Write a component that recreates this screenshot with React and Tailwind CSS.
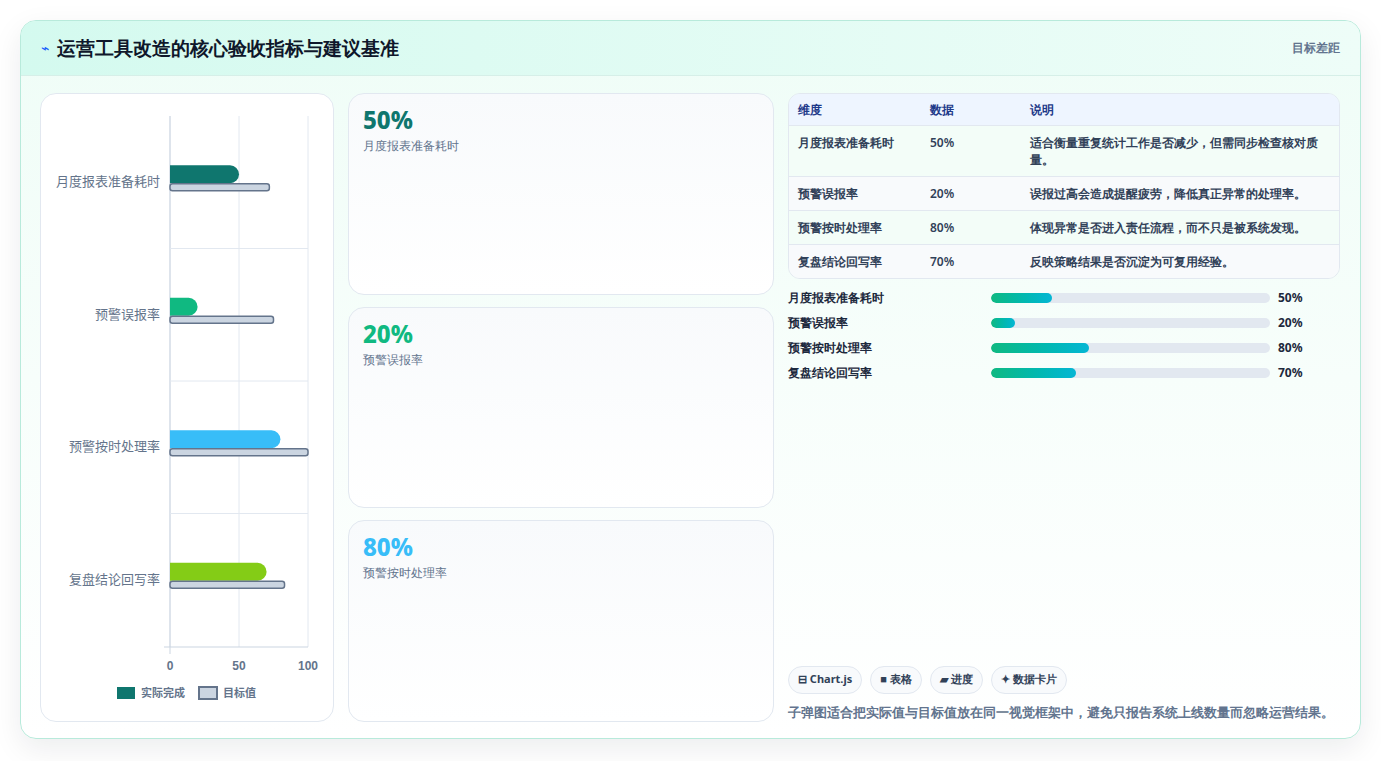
const rows = [
  { name: "月度报表准备耗时", v: 50, t: 72, c: "#0f766e", vc: "text-[#0f766e]", note: "适合衡量重复统计工作是否减少，但需同步检查核对质量。" },
  { name: "预警误报率", v: 20, t: 75, c: "#10b981", vc: "text-[#10b981]", note: "误报过高会造成提醒疲劳，降低真正异常的处理率。" },
  { name: "预警按时处理率", v: 80, t: 100, c: "#38bdf8", vc: "text-[#38bdf8]", note: "体现异常是否进入责任流程，而不只是被系统发现。" },
  { name: "复盘结论回写率", v: 70, t: 83, c: "#84cc16", vc: "", note: "反映策略结果是否沉淀为可复用经验。" },
];

function Chart() {
  const x0 = 129, w = 138, top = 22, band = 132.5;
  return (
    <svg width="294" height="627" className="block">
      {[0, 50, 100].map((g) => (
        <line key={g} x1={x0 + (g / 100) * w} x2={x0 + (g / 100) * w} y1={top} y2={553} stroke="#e2e8f0" />
      ))}
      <line x1={x0} x2={x0} y1={top} y2={560} stroke="#cbd5e1" />
      <line x1={x0 - 6} x2={x0 + w} y1={553} y2={553} stroke="#cbd5e1" />
      {[1, 2, 3].map((i) => (
        <line key={i} x1={x0} x2={x0 + w} y1={top + band * i} y2={top + band * i} stroke="#e2e8f0" />
      ))}
      {rows.map((r, i) => {
        const cy = top + band * i + band / 2;
        return (
          <g key={r.name}>
            <text x={x0 - 10} y={cy + 4} textAnchor="end" fontSize="13" fill="#64748b" fontFamily="Noto Sans CJK SC, sans-serif">{r.name}</text>
            <path d={`M${x0} ${cy - 17} H${x0 + (r.v / 100) * w - 9} a9 9 0 0 1 0 18 H${x0} Z`} fill={r.c} />
            <rect x={x0} y={cy + 1.5} width={(r.t / 100) * w} height={7} rx="2.5" fill="#cbd5e1" stroke="#64748b" strokeWidth="1.5" />
          </g>
        );
      })}
      {[0, 50, 100].map((g) => (
        <text key={g} x={x0 + (g / 100) * w} y={576} textAnchor="middle" fontSize="12" fontWeight="700" fill="#64748b" fontFamily="Liberation Sans, sans-serif">{g}</text>
      ))}
      <rect x="76" y="593" width="18" height="12" fill="#0f766e" />
      <text x="100" y="603" fontSize="11" fontWeight="700" fill="#64748b" fontFamily="Noto Sans CJK SC, sans-serif">实际完成</text>
      <rect x="158" y="593" width="18" height="12" fill="#cbd5e1" stroke="#64748b" strokeWidth="2" />
      <text x="182" y="603" fontSize="11" fontWeight="700" fill="#64748b" fontFamily="Noto Sans CJK SC, sans-serif">目标值</text>
    </svg>
  );
}

export default function App() {
  return (
    <div className="min-h-screen bg-white p-5 pb-0 font-['Noto_Sans','Noto_Sans_CJK_SC',sans-serif] text-slate-900">
      <div className="h-[719px] rounded-2xl border border-[#b8eadb] bg-gradient-to-b from-[#effdf7] to-white shadow-[0_10px_30px_rgba(15,23,42,0.08)] overflow-hidden flex flex-col">
        <div className="h-[55px] shrink-0 flex items-center justify-between px-5 bg-gradient-to-r from-[#d4faef] to-[#eefdf8] border-b border-[#d6efe8]">
          <div className="flex items-center gap-[8px]">
            <span className="text-[14px] text-blue-600 leading-none">⌁</span>
            <h1 className="text-[19px] font-extrabold text-slate-900">运营工具改造的核心验收指标与建议基准</h1>
          </div>
          <span className="text-xs font-semibold text-slate-500">目标差距</span>
        </div>
        <div className="flex-1 flex gap-[14px] pl-[19px] pr-5 pt-[17px] pb-[18px]">
          <div className="w-[294px] shrink-0 rounded-2xl border border-slate-200 bg-white">
            <Chart />
          </div>
          <div className="w-[426px] shrink-0 flex flex-col gap-3">
            {rows.slice(0, 3).map((r) => (
              <div key={r.name} className="flex-1 rounded-2xl border border-slate-200 bg-gradient-to-b from-[#f8fafc] to-white px-[14px] pt-[10px]">
                <div className={`text-2xl font-extrabold ${r.vc} font-['Liberation_Sans',sans-serif]`}>{r.v}%</div>
                <div className="text-xs text-slate-500 mt-[2px]">{r.name}</div>
              </div>
            ))}
          </div>
          <div className="flex-1 flex flex-col">
            <div className="rounded-xl border border-slate-200 overflow-hidden text-xs">
              <div className="flex h-[32px] items-center bg-[#eef5ff] border-b border-slate-200 font-bold text-[#1e3a8a]">
                <div className="w-[141px] pl-[9px]">维度</div>
                <div className="w-[100px]">数据</div>
                <div className="flex-1">说明</div>
              </div>
              {rows.map((r, i) => (
                <div key={r.name} className={`flex py-[8px] font-semibold text-slate-700 leading-[17px] ${i % 2 ? "bg-[#f8fafc]" : "bg-[#f3fdf8]"} ${i < 3 ? "border-b border-slate-200" : ""}`}>
                  <div className="w-[141px] pl-[9px]">{r.name}</div>
                  <div className="w-[100px]">{r.v}%</div>
                  <div className="flex-1 pr-4">{r.note}</div>
                </div>
              ))}
            </div>
            <div className="mt-[10px] flex flex-col gap-[8px]">
              {rows.map((r) => (
                <div key={r.name} className="flex items-center h-[17px] text-xs font-semibold text-slate-800">
                  <div className="w-[203px]">{r.name}</div>
                  <div className="w-[279px] h-[10px] rounded-full bg-[#e2e8f0] overflow-hidden">
                    <div className="h-full rounded-full bg-gradient-to-r from-[#10b981] to-[#06b6d4]" style={{ width: `${r.v * 0.4375}%` }} />
                  </div>
                  <div className="ml-2 font-bold font-['Liberation_Sans',sans-serif]">{r.v}%</div>
                </div>
              ))}
            </div>
            <div className="mt-auto flex gap-2">
              {["⊟ Chart.js", "■ 表格", "▰ 进度", "✦ 数据卡片"].map((c) => (
                <span key={c} className="h-[28px] flex items-center rounded-full border border-slate-200 bg-[#f8fafc] px-[9px] text-[11px] font-bold text-slate-700">{c}</span>
              ))}
            </div>
            <p className="mt-[9px] text-[13px] font-semibold text-slate-500">子弹图适合把实际值与目标值放在同一视觉框架中，避免只报告系统上线数量而忽略运营结果。</p>
          </div>
        </div>
      </div>
    </div>
  );
}
